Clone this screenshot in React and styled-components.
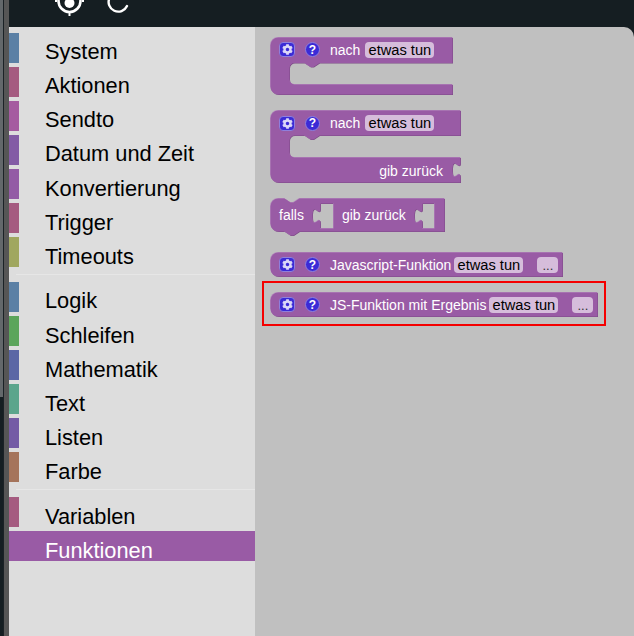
import React from 'react';
import styled, { createGlobalStyle } from 'styled-components';
import { FaCog } from 'react-icons/fa';

const Global = createGlobalStyle`
  html, body { margin: 0; padding: 0; width: 634px; height: 636px; overflow: hidden; background: #151e22; }
  * { box-sizing: border-box; }
`;

const Page = styled.div`
  display: flex;
  width: 634px;
  height: 636px;
  overflow: hidden;
  font-family: "Liberation Sans", Arial, sans-serif;
`;
const Rail = styled.div`display: flex; width: 9px; flex: none;`;
const RailEdge = styled.div`
  width: 4px;
  border-right: 1px solid #1b2226;
  background: linear-gradient(#63686b 0 397px, #151e22 397px);
`;
const RailBar = styled.div`width: 5px; background: #565656;`;
const Main = styled.div`display: flex; flex-direction: column; flex: 1; min-width: 0; background: #151e22;`;
const Header = styled.header`
  display: flex;
  height: 27px;
  flex: none;
  align-items: flex-start;
  padding-left: 45px;
  gap: 21px;
  overflow: hidden;
  background: #151e22;
`;
const Body = styled.div`display: flex; flex: 1; min-height: 0;`;
const Sidebar = styled.nav`
  width: 246px;
  flex: none;
  padding-top: 5.6px;
  background: #dddddd;
  display: flex;
  flex-direction: column;
`;
const Group = styled.div`display: flex; flex-direction: column; gap: 4px;`;
const Row = styled.div`
  height: 30.1px;
  padding: 4.6px 0 0 26px;
  border-left: 10px solid ${p => p.$color};
  background: ${p => (p.$active ? p.$color : 'transparent')};
  color: ${p => (p.$active ? '#ffffff' : '#000000')};
  font-size: 21.8px;
  line-height: 30px;
  white-space: nowrap;
`;
const Separator = styled.div`
  height: 1px;
  margin: 6.6px 0 7px 7px;
  background: #e6e6e6;
`;
const Flyout = styled.main`
  flex: 1;
  display: flex;
  flex-direction: column;
  gap: 15px;
  padding: 10px 0 0 15px;
  background: #c0c0c0;
  border-top-right-radius: 10px;
`;
const Block = styled.div`
  position: relative;
  flex: none;
  display: flex;
  flex-direction: column;
  width: ${p => p.$w}px;
  height: ${p => p.$h}px;
  margin-top: ${p => p.$mt || 0}px;
`;
const Marked = styled(Block)`
  &::after {
    content: '';
    position: absolute;
    inset: -11px -8px -9px -8px;
    border: 2px solid #f40000;
  }
`;
const Shape = styled.svg`
  position: absolute;
  left: 0;
  top: 0;
  overflow: visible;
`;
const Line = styled.div`
  position: relative;
  display: flex;
  align-items: center;
  height: ${p => p.$h}px;
  padding-left: 9px;
  color: #ffffff;
  font-size: 14px;
  white-space: nowrap;
`;
const Footer = styled.div`
  position: relative;
  display: flex;
  align-items: center;
  justify-content: flex-end;
  margin-top: auto;
  height: 26px;
  padding: 2px 18px 0 0;
  color: #ffffff;
  font-size: 14px;
`;
const GearButton = styled.span`
  display: flex;
  align-items: center;
  justify-content: center;
  width: 16px;
  height: 15px;
  margin-right: 10px;
  border-radius: 4px;
  background: #3b2bd6;
  border: 1px solid #8f7fdc;
  color: #dcd8f8;
  font-size: 11px;
`;
const HelpButton = styled.span`
  display: flex;
  align-items: center;
  justify-content: center;
  width: 15px;
  height: 15px;
  margin-right: 10px;
  border-radius: 50%;
  background: #3b2bd6;
  border: 1px solid #8f7fdc;
  color: #ffffff;
  font-size: 12px;
  font-weight: 700;
`;
const Label = styled.span`margin-left: ${p => p.$ml || 0}px;`;
const Field = styled.span`
  display: flex;
  align-items: center;
  justify-content: center;
  width: 69px;
  height: 16px;
  margin-left: ${p => p.$ml || 0}px;
  border-radius: 4px;
  background: #d6bddb;
  color: #000000;
  font-size: 14.67px;
`;
const Dots = styled.span`
  display: flex;
  align-items: flex-end;
  justify-content: center;
  width: 21px;
  height: 16px;
  margin-left: 14px;
  border-radius: 4px;
  background: #d6bddb;
  color: #333333;
  font-size: 13px;
  line-height: 15px;
`;

const BlockShape = ({ w, h, d }) => (
  <Shape width={w} height={h}>
    <path d={d} fill="#7b4984" fillRule="evenodd" transform="translate(1 1)" />
    <path d={d} fill="#b48cbd" fillRule="evenodd" />
    <path d={d} fill="#995ba5" fillRule="evenodd" transform="translate(.5 .5)" />
  </Shape>
);

const Controls = () => (
  <>
    <GearButton><FaCog /></GearButton>
    <HelpButton>?</HelpButton>
  </>
);

const tabUp = 'c 0,-10 -8,8 -8,-7.5 s 8,2.5 8,-7.5';
const tabDown = 'c 0,10 -8,-8 -8,7.5 s 8,-2.5 8,7.5';
const topLeft = 'M0,8 a8,8 0 0 1 8,-8';
const bottomLeft = 'a8,8 0 0 1 -8,-8 z';
const notchUp = 'l -6,4 h -3 l -6,-4';
const notchDown = 'l 6,4 h 3 l 6,-4';

const d1 = `${topLeft} H182 V25.5 H49 ${notchUp} H24 a5,5 0 0 0 -5,5 V42 a5,5 0 0 0 5,5 H182 V57 H8 ${bottomLeft}`;
const d2 = `${topLeft} H190 V25 H49 ${notchUp} H24 a5,5 0 0 0 -5,5 V42 a5,5 0 0 0 5,5 H190 V52 ${tabDown} V72 H8 ${bottomLeft}`;
const d3 = `${topLeft} H14 ${notchDown} H174 V33 H29 ${notchUp} H8 ${bottomLeft} M50,5 H63 V30 H50 V25 ${tabUp} z M152,5 H164 V30 H152 V25 ${tabUp} z`;
const bar = w => `${topLeft} H${w} V24 H8 ${bottomLeft}`;

const groups = [
  [['System', '#5b80a5'], ['Aktionen', '#a55b80'], ['Sendto', '#a55ba0'], ['Datum und Zeit', '#835ba5'], ['Konvertierung', '#935ba5'], ['Trigger', '#a55b80'], ['Timeouts', '#a0a75f']],
  [['Logik', '#5b80a5'], ['Schleifen', '#5ba55b'], ['Mathematik', '#5b67a5'], ['Text', '#5ba58c'], ['Listen', '#745ba5'], ['Farbe', '#a5745b']],
  [['Variablen', '#a55b80'], ['Funktionen', '#995ba5', true]],
];

export default function App() {
  return (
    <Page>
      <Global />
      <Rail><RailEdge /><RailBar /></Rail>
      <Main>
        <Header>
          <svg width="32" height="27" viewBox="0 0 32 27" fill="none" stroke="#fff">
            <circle cx="15.5" cy="1" r="11" strokeWidth="2.6" />
            <circle cx="15.5" cy="3" r="5" fill="#fff" stroke="none" />
            <path d="M15.5 12v4" strokeWidth="2" />
            <path d="M3 1H1M28 1h2" strokeWidth="2" />
          </svg>
          <svg width="24" height="27" viewBox="0 0 24 27" fill="none" stroke="#fff" strokeWidth="2.4">
            <path d="M2.5 -2 A9.2 9.2 0 1 0 20 6" strokeLinecap="round" />
          </svg>
        </Header>
        <Body>
          <Sidebar>
            {groups.map((g, i) => (
              <React.Fragment key={i}>
                {i > 0 && <Separator />}
                <Group>
                  {g.map(([name, color, active]) => (
                    <Row key={name} $color={color} $active={active}>{name}</Row>
                  ))}
                </Group>
              </React.Fragment>
            ))}
          </Sidebar>
          <Flyout>
            <Block $w={183} $h={58}>
              <BlockShape w={183} h={58} d={d1} />
              <Line $h={25}><Controls /><Label>nach</Label><Field $ml={5}>etwas tun</Field></Line>
            </Block>
            <Block $w={191} $h={73}>
              <BlockShape w={191} h={73} d={d2} />
              <Line $h={26}><Controls /><Label>nach</Label><Field $ml={5}>etwas tun</Field></Line>
              <Footer>gib zurück</Footer>
            </Block>
            <Block $w={175} $h={34}>
              <BlockShape w={175} h={34} d={d3} />
              <Line $h={38}><Label>falls</Label><Label $ml={38}>gib zurück</Label></Line>
            </Block>
            <Block $w={293} $h={25} $mt={5}>
              <BlockShape w={293} h={25} d={bar(292)} />
              <Line $h={25}><Controls /><Label>Javascript-Funktion</Label><Field $ml={3}>etwas tun</Field><Dots>...</Dots></Line>
            </Block>
            <Marked $w={328} $h={25}>
              <BlockShape w={328} h={25} d={bar(327)} />
              <Line $h={25}><Controls /><Label>JS-Funktion mit Ergebnis</Label><Field $ml={3}>etwas tun</Field><Dots>...</Dots></Line>
            </Marked>
          </Flyout>
        </Body>
      </Main>
    </Page>
  );
}
